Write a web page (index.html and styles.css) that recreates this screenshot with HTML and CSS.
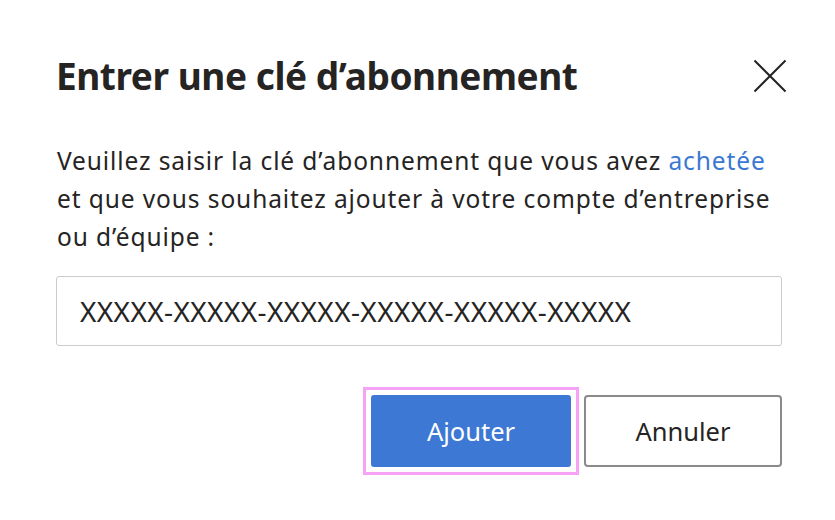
FILE: index.html
```html
<!DOCTYPE html>
<html lang="fr">
<head>
<meta charset="utf-8">
<title>Entrer une clé d'abonnement</title>
<link rel="stylesheet" href="styles.css">
</head>
<body>
<div class="dialog">
  <div class="header">
    <h1 class="title">Entrer une clé d’abonnement</h1>
    <button class="close" aria-label="Fermer">
      <svg width="34" height="34" viewBox="0 0 34 34"><path d="M1.5 1.5 L32.5 32.5 M32.5 1.5 L1.5 32.5" stroke="#252423" stroke-width="2" fill="none"/></svg>
    </button>
  </div>
  <p class="desc">Veuillez saisir la clé d’abonnement que vous avez <a class="link" href="#">achetée</a> et que vous souhaitez ajouter à votre compte d’entreprise ou d’équipe :</p>
  <div class="field">XXXXX-XXXXX-XXXXX-XXXXX-XXXXX-XXXXX</div>
  <div class="actions">
    <div class="focus-ring"><button class="btn primary">Ajouter</button></div>
    <button class="btn secondary">Annuler</button>
  </div>
</div>
</body>
</html>
```
FILE: styles.css
```css
html, body {
  margin: 0;
  padding: 0;
  background: #ffffff;
}
body {
  font-family: "Noto Sans", "Open Sans", sans-serif;
  color: #252423;
}
.dialog {
  width: 726px;
  padding: 52px 0 0 56px;
}
.header {
  display: flex;
  justify-content: space-between;
  align-items: center;
  height: 48px;
}
.title {
  margin: 0;
  font-size: 37px;
  font-weight: 700;
  line-height: 48px;
  letter-spacing: -0.45px;
  white-space: nowrap;
}
.close {
  border: none;
  background: none;
  padding: 0;
  margin-right: -5px;
  width: 34px;
  height: 34px;
  display: flex;
}
.desc {
  margin: 42px 0 0 1px;
  font-size: 24.5px;
  line-height: 38px;
  letter-spacing: 0.9px;
  width: 726px;
}
.link {
  color: #3a78d4;
  text-decoration: none;
}
.field {
  margin-top: 20px;
  border: 1px solid #cccccc;
  border-radius: 3px;
  box-sizing: border-box;
  height: 70px;
  display: flex;
  align-items: center;
  padding-left: 23px;
  font-size: 28px;
  letter-spacing: 0.4px;
  color: #252423;
}
.actions {
  display: flex;
  justify-content: flex-end;
  align-items: center;
  gap: 5px;
  margin-top: 41px;
}
.focus-ring {
  border: 3px solid #f6a2f6;
  padding: 5px;
  display: flex;
}
.btn {
  font-family: "Noto Sans", "Open Sans", sans-serif;
  font-size: 25.5px;
  height: 72px;
  border-radius: 3px;
  box-sizing: border-box;
  cursor: pointer;
  margin: 0;
}
.primary {
  width: 200px;
  background: #3c78d4;
  color: #ffffff;
  border: none;
}
.secondary {
  width: 198px;
  background: #ffffff;
  color: #252423;
  border: 2px solid #8a8a8a;
  border-radius: 4px;
}
```
